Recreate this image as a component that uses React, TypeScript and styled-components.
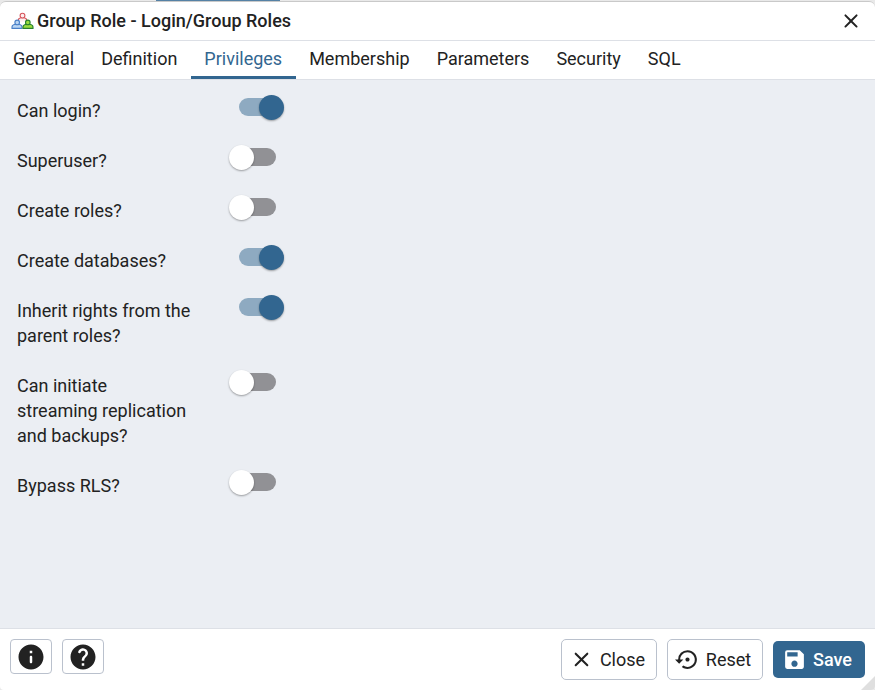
import React, { useState } from "react";
import styled, { createGlobalStyle } from "styled-components";
import { MdSave, MdSettingsBackupRestore } from "react-icons/md";

const color = {
  text: "#222222",
  primary: "#326690",
  trackOn: "#8eaac1",
  trackOff: "#919195",
  panel: "#ebeef3",
  border: "#dde0e6",
  control: "#bac1cd",
};

const GlobalStyle = createGlobalStyle`
  *, *::before, *::after { box-sizing: border-box; }
  body {
    margin: 0;
    background: #e9e9e9;
    color: ${color.text};
    font-family: Roboto, "Liberation Sans", sans-serif;
    font-size: 18px;
  }
  button { font: inherit; color: inherit; cursor: pointer; }
`;

const Page = styled.div`
  display: flex;
  flex-direction: column;
  min-height: 100vh;
`;

const Backdrop = styled.div`
  height: 1px;
  display: flex;
  padding-left: 156px;
`;

const BackdropTab = styled.div`
  width: 124px;
  background: #5581a5;
`;

const Dialog = styled.main`
  position: relative;
  flex: 1;
  display: flex;
  flex-direction: column;
  border-top: 1px solid #c9c9c9;
  border-radius: 6px 6px 4px 4px;
  background: #ffffff;
  overflow: hidden;
`;

const TitleBar = styled.header`
  display: flex;
  align-items: center;
  gap: 3px;
  height: 39px;
  padding: 0 12px 1px 11px;
  border-bottom: 1px solid ${color.border};
`;

const Title = styled.h1`
  flex: 1;
  margin: 0;
  font-size: 18px;
  font-weight: 500;
  line-height: 24px;
`;

const IconButton = styled.button`
  display: flex;
  padding: 0;
  border: 0;
  background: none;
`;

const TabList = styled.div`
  display: flex;
  height: 39px;
  border-bottom: 1px solid ${color.border};
`;

const Tab = styled.button<{ $active: boolean }>`
  padding: 0 14px 0 13px;
  border: 0;
  border-bottom: 3px solid ${(p) => (p.$active ? color.primary : "transparent")};
  background: none;
  color: ${(p) => (p.$active ? color.primary : color.text)};
  line-height: 34px;
  white-space: nowrap;
`;

const Panel = styled.section`
  flex: 1;
  display: flex;
  flex-direction: column;
  gap: 25px;
  padding: 18px 17px;
  background: ${color.panel};
`;

const Field = styled.label`
  display: grid;
  grid-template-columns: minmax(0, 174px) 56px;
  column-gap: 38px;
  align-items: start;
  line-height: 25px;
`;

const Switch = styled.input`
  appearance: none;
  display: flex;
  align-items: center;
  width: 37px;
  height: 18px;
  margin: 0 0 0 10px;
  border-radius: 9px;
  background: ${color.trackOff};
  cursor: pointer;

  &::before {
    content: "";
    flex: none;
    width: 25px;
    height: 25px;
    margin-left: -10px;
    border-radius: 50%;
    background: #ffffff;
    box-shadow: 0 1px 2px rgba(0, 0, 0, 0.35);
  }

  &:checked {
    background: ${color.trackOn};
  }

  &:checked::before {
    margin-left: 20px;
    background: ${color.primary};
  }
`;

const Footer = styled.footer`
  display: flex;
  align-items: center;
  gap: 10px;
  height: 62px;
  padding: 0 10px;
  border-top: 1px solid ${color.border};
`;

const Spacer = styled.div`
  flex: 1;
`;

const HelpButton = styled.button`
  display: flex;
  align-items: center;
  justify-content: center;
  width: 42px;
  height: 35px;
  margin-bottom: 6px;
  padding: 0;
  border: 1px solid ${color.control};
  border-radius: 4px;
  background: #ffffff;
`;

const ActionButton = styled.button<{ $primary?: boolean }>`
  display: flex;
  align-items: center;
  justify-content: center;
  gap: 6px;
  width: ${(p) => (p.$primary ? "92px" : "96px")};
  height: ${(p) => (p.$primary ? "37px" : "41px")};
  padding: 0 4px 1px 0;
  border: ${(p) => (p.$primary ? "0" : `1px solid ${color.control}`)};
  border-radius: 5px;
  background: ${(p) => (p.$primary ? color.primary : "#ffffff")};
  && { color: ${(p) => (p.$primary ? "#ffffff" : color.text)}; }
  font-weight: ${(p) => (p.$primary ? 500 : 400)};
`;

const ResizeGrip = styled.svg`
  position: absolute;
  right: 0;
  bottom: 0;
`;

function GroupIcon() {
  return (
    <svg width="23" height="18" viewBox="0 0 23 18" strokeWidth="1.1" aria-hidden="true">
      <path d="M7.3 9.4V8.3q0-2 2.6-2.5h3.2q2.6.5 2.6 2.5v1.1" fill="#fdeeee" stroke="#d6555c" />
      <circle cx="11.5" cy="3.6" r="2.4" fill="#fdeeee" stroke="#d6555c" />
      <path d="M1 16.4v-1.5q0-2 3.2-2.6h3.6q3.2.6 3.2 2.6v1.5z" fill="#b9d5f3" stroke="#4a80c8" />
      <circle cx="6.2" cy="10.4" r="2.3" fill="#b9d5f3" stroke="#4a80c8" />
      <path d="M12 16.4v-1.5q0-2 3.2-2.6h3.6q3.2.6 3.2 2.6v1.5z" fill="#9bdc3f" stroke="#28802d" />
      <circle cx="16.8" cy="10.4" r="2.3" fill="#9bdc3f" stroke="#28802d" />
    </svg>
  );
}

function CloseIcon({ size }: { size: number }) {
  return (
    <svg width={size} height={size} viewBox="0 0 24 24" fill="currentColor" aria-hidden="true">
      <path d="M18.3 5.71a.9959.9959 0 0 0-1.41 0L12 10.59 7.11 5.7a.9959.9959 0 0 0-1.41 0c-.39.39-.39 1.02 0 1.41L10.59 12 5.7 16.89c-.39.39-.39 1.02 0 1.41.39.39 1.02.39 1.41 0L12 13.41l4.89 4.89c.39.39 1.02.39 1.41 0 .39-.39.39-1.02 0-1.41L13.41 12l4.89-4.89c.38-.38.38-1.02 0-1.4z" />
    </svg>
  );
}

function InfoIcon() {
  return (
    <svg width="30" height="30" viewBox="0 0 24 24" fill="currentColor" aria-hidden="true">
      <path d="M12 2C6.48 2 2 6.48 2 12s4.48 10 10 10 10-4.48 10-10S17.52 2 12 2zm0 15c-.55 0-1-.45-1-1v-4c0-.55.45-1 1-1s1 .45 1 1v4c0 .55-.45 1-1 1zm1-8h-2V7h2v2z" />
    </svg>
  );
}

function HelpIcon() {
  return (
    <svg width="30" height="30" viewBox="0 0 24 24" fill="currentColor" aria-hidden="true">
      <path d="M12 2C6.48 2 2 6.48 2 12s4.48 10 10 10 10-4.48 10-10S17.52 2 12 2zm1 17h-2v-2h2v2zm2.07-7.75l-.9.92c-.5.51-.86.97-1.04 1.69-.08.32-.13.68-.13 1.14h-2v-.5c0-.46.08-.9.22-1.31.2-.58.53-1.1.95-1.52l1.24-1.26c.46-.44.68-1.1.55-1.8-.13-.72-.69-1.33-1.39-1.53-1.11-.31-2.14.32-2.47 1.27-.12.37-.43.65-.82.65h-.3C8.4 9 8 8.44 8.16 7.88c.43-1.47 1.68-2.59 3.23-2.83 1.52-.24 2.97.55 3.87 1.8 1.18 1.63.83 3.38-.19 4.4z" />
    </svg>
  );
}

const tabs = ["General", "Definition", "Privileges", "Membership", "Parameters", "Security", "SQL"];

const privileges = [
  { id: "login", label: "Can login?", on: true },
  { id: "superuser", label: "Superuser?", on: false },
  { id: "createrole", label: "Create roles?", on: false },
  { id: "createdb", label: "Create databases?", on: true },
  { id: "inherit", label: "Inherit rights from the parent roles?", on: true },
  { id: "replication", label: "Can initiate streaming replication and backups?", on: false },
  { id: "bypassrls", label: "Bypass RLS?", on: false },
];

export default function App() {
  const [active, setActive] = useState("Privileges");

  return (
    <Page>
      <GlobalStyle />
      <Backdrop>
        <BackdropTab />
      </Backdrop>
      <Dialog>
        <TitleBar>
          <GroupIcon />
          <Title>Group Role - Login/Group Roles</Title>
          <IconButton type="button" aria-label="Close dialog">
            <CloseIcon size={24} />
          </IconButton>
        </TitleBar>
        <TabList role="tablist">
          {tabs.map((tab) => (
            <Tab
              key={tab}
              type="button"
              role="tab"
              aria-selected={tab === active}
              $active={tab === active}
              onClick={() => setActive(tab)}
            >
              {tab}
            </Tab>
          ))}
        </TabList>
        <Panel role="tabpanel" aria-label={active}>
          {privileges.map((p) => (
            <Field key={p.id} htmlFor={p.id}>
              <span>{p.label}</span>
              <Switch id={p.id} type="checkbox" role="switch" defaultChecked={p.on} />
            </Field>
          ))}
        </Panel>
        <Footer>
          <HelpButton type="button" aria-label="Info">
            <InfoIcon />
          </HelpButton>
          <HelpButton type="button" aria-label="Help">
            <HelpIcon />
          </HelpButton>
          <Spacer />
          <ActionButton type="button">
            <CloseIcon size={25} />
            Close
          </ActionButton>
          <ActionButton type="button">
            <MdSettingsBackupRestore size={25} />
            Reset
          </ActionButton>
          <ActionButton type="button" $primary>
            <MdSave size={25} />
            Save
          </ActionButton>
        </Footer>
        <ResizeGrip width="14" height="14" viewBox="0 0 14 14" aria-hidden="true">
          <path d="M14 0v14H0z" fill="#dfdfdf" />
        </ResizeGrip>
      </Dialog>
    </Page>
  );
}
